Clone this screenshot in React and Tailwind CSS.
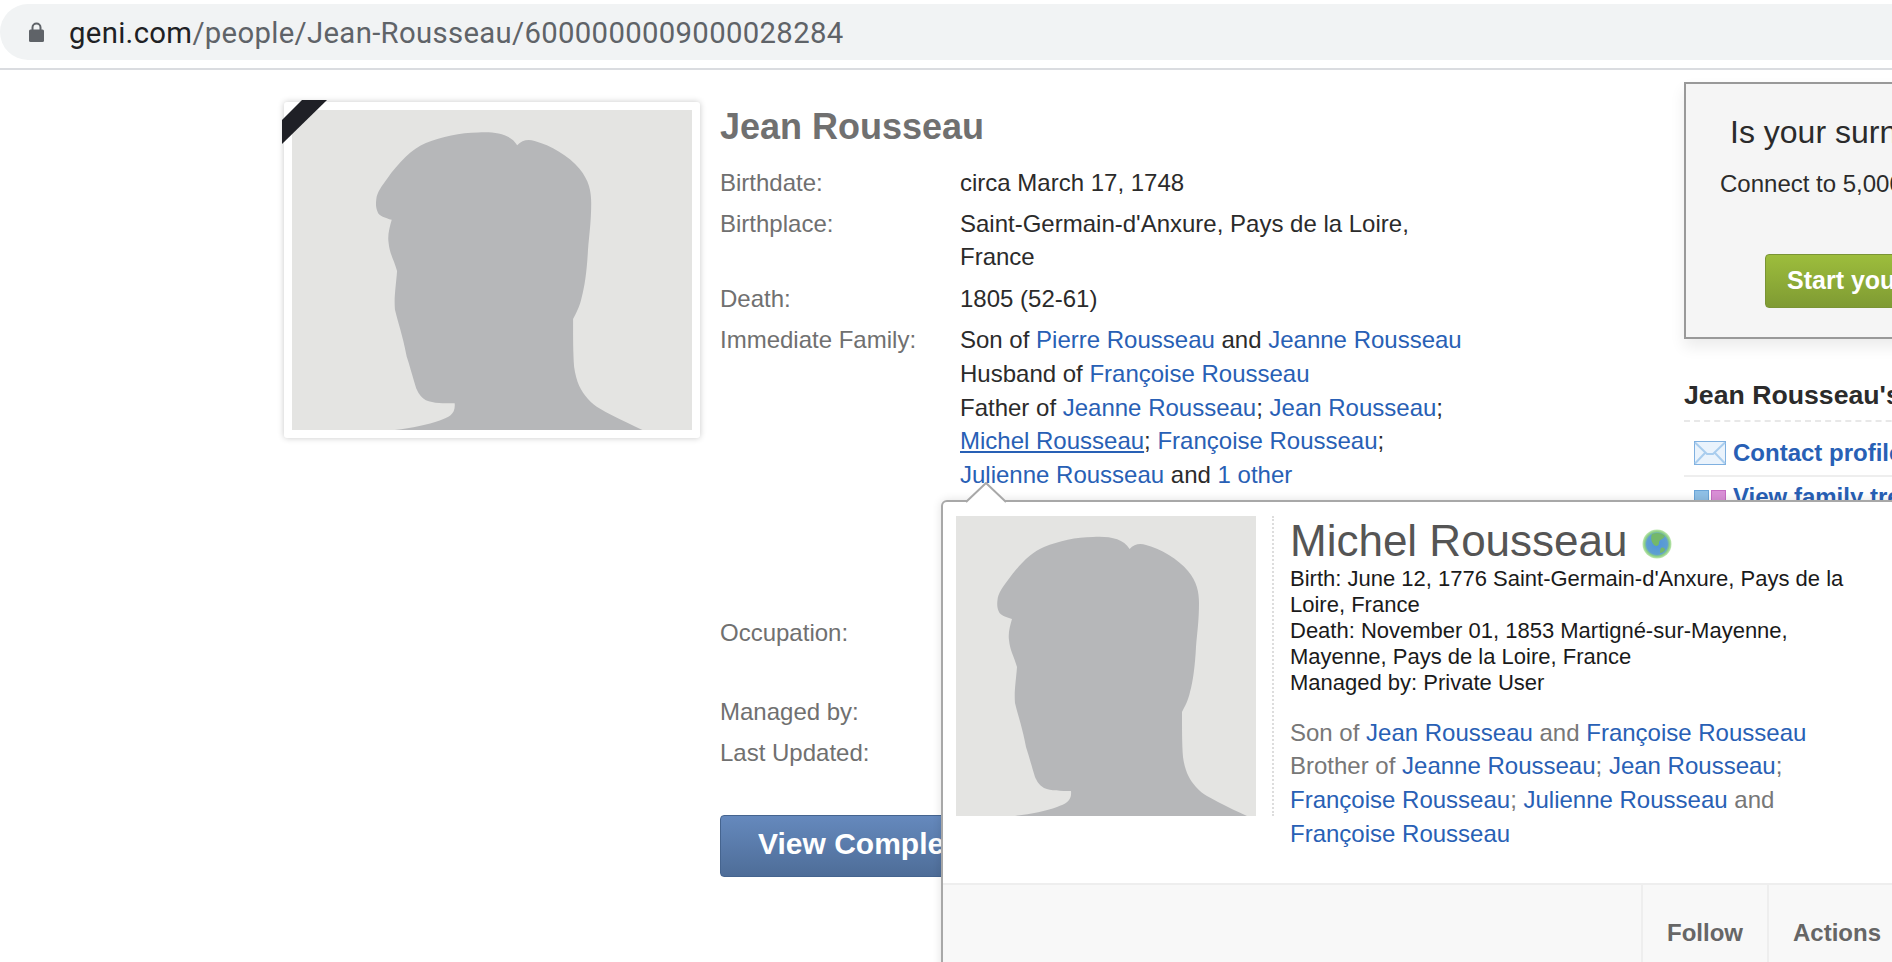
import React from "react";

const L = ({ children, u }) => (
  <a className={"whitespace-nowrap text-[#2860b5] " + (u ? "underline" : "")}>{children}</a>
);

function Photo({ className }) {
  return (
    <svg viewBox="0 0 300 300" className={className}>
      <rect x="-100" y="-10" width="500" height="320" fill="#e4e4e2" />
      <path
        fill="#b6b7b9"
        d="M137 21C152 20 167 22 173.600 33C178 28 184 27 190 29C205 33 222 43 232 55C241 66 243 76 243 87C243 105 241 118 240 131C239 150 237 165 234 176C232 185 229 190 226 196C226 212 226 228 227 241C229 255 233 263 240 271C247 279 255 282 262 286C272 291 282 296 291 300L59 300C75 298 90 295 101 291C110 288 116 285 115 275C105 275 95 275 88 272C82 268 81 265 79 261C75 248 73 240 70 231C66 210 62 200 59 187C58 175 60 165 61 151C58 140 54 135 53 124C52 117 54 110 56 103C50 101 44 99 43 96C41 92 41 88 41.500 84C42 77 47 71 52 64C62 50 75 36 88 31C103 25 120 21 137 21Z"
      />
    </svg>
  );
}

function Row({ label, className, children }) {
  return (
    <div className={"flex " + (className || "")}>
      <div className="w-[240px] shrink-0 text-[#707070]">{label}</div>
      <div className="w-[505px]">{children}</div>
    </div>
  );
}

export default function App() {
  return (
    <div className="relative h-[962px] w-[1892px] overflow-hidden bg-white font-['Liberation_Sans',Arial,sans-serif] text-[24px] leading-[33.75px] text-[#2b2b2b]">
      {/* Browser address bar */}
      <header className="h-[70px] border-b-2 border-[#dadce0] pt-[4px]">
        <div className="flex h-[56px] items-center rounded-l-[28px] bg-[#f1f3f4] pl-[28px]">
          <svg width="17" height="20" viewBox="0 0 17 20" className="shrink-0">
            <path d="M4.500 8V5.500a4 4 0 0 1 8 0V8" fill="none" stroke="#5f6368" strokeWidth="2" />
            <rect x="1" y="7.500" width="15" height="12.500" rx="1.500" fill="#5f6368" />
          </svg>
          <div className="ml-[24px] whitespace-nowrap pt-[3px] font-['Roboto',sans-serif] text-[29.300px] tracking-[0.33px] text-[#5f6368]">
            <span className="text-[#202124]">geni.com</span>/people/Jean-Rousseau/6000000009000028284
          </div>
        </div>
      </header>

      <main className="flex pl-[284px] pt-[12px]">
        {/* Profile photo */}
        <div className="relative mt-[20px] h-[336px] w-[416px] shrink-0 rounded-[3px] bg-white p-[8px] shadow-[0_0_6px_rgba(0,0,0,0.22)]">
          <Photo className="h-[320px] w-[400px]" />
          <svg width="46" height="46" viewBox="0 0 46 46" className="absolute left-[-2px] top-[-2px]">
            <polygon points="20,0 45,0 0,44 0,20" fill="#1f2026" />
          </svg>
        </div>

        {/* Profile details */}
        <div className="ml-[20px] w-[964px] shrink-0">
          <h1 className="mt-[20px] h-[63.500px] pt-[3px] text-[36px] font-bold leading-[44px] text-[#707070]">Jean Rousseau</h1>
          <Row label="Birthdate:" className="h-[41px]">circa March 17, 1748</Row>
          <Row label="Birthplace:" className="h-[75px]">Saint-Germain-d'Anxure, Pays de la Loire, France</Row>
          <Row label="Death:" className="h-[41.500px]">1805 (52-61)</Row>
          <Row label="Immediate Family:" className="h-[293px]">
            <div>Son of <L>Pierre Rousseau</L> and <L>Jeanne Rousseau</L></div>
            <div>Husband of <L>Françoise Rousseau</L></div>
            <div>
              Father of <L>Jeanne Rousseau</L>; <L>Jean Rousseau</L>; <L u>Michel Rousseau</L>; <L>Françoise Rousseau</L>;{" "}
              <L>Julienne Rousseau</L> and <L>1 other</L>
            </div>
            <div>Brother of <L>Paul Rousseau</L>; <L>Pierre Rousseau</L></div>
          </Row>
          <Row label="Occupation:" className="h-[79px]" />
          <Row label="Managed by:" className="h-[41px]" />
          <Row label="Last Updated:" className="h-[78.500px]" />
          <button className="ml-0 h-[62px] w-[420px] rounded-[4px] border border-[#45648f] bg-gradient-to-b from-[#6589bd] to-[#4e6d98] pb-[4px] pl-[37px] text-left text-[30px] font-bold text-white">
            View Complete Profile
          </button>
        </div>

        {/* Right column */}
        <aside className="w-[500px] shrink-0">
          <div className="h-[257px] border-2 border-[#999] bg-[#f5f5f5] shadow-[0_8px_14px_rgba(0,0,0,0.08)]">
            <div className="ml-[44px] mt-[26px] whitespace-nowrap text-[32px] leading-[44px]">Is your surname Rousseau?</div>
            <div className="ml-[34px] mt-[13px] whitespace-nowrap leading-[34px]">Connect to 5,000 people</div>
            <div className="ml-[79px] mt-[53px] flex h-[54px] w-[360px] items-center rounded-[4px] border border-[#7a9435] bg-gradient-to-b from-[#9dbd3c] to-[#7f9b33] pl-[21px] text-[25px] font-bold text-white">
              Start your tree
            </div>
          </div>
          <div className="mt-[39px] h-[44px] whitespace-nowrap border-b-2 border-dashed border-[#e8e8e8] text-[26.670px] font-bold leading-[34px]">
            Jean Rousseau's Actions
          </div>
          <div className="flex h-[55px] items-center border-b-2 border-[#eee] pl-[10px] pt-[9px] text-[24px] font-bold text-[#2860b5]">
            <svg width="32" height="24" viewBox="0 0 32 24" className="shrink-0">
              <rect x="0.500" y="0.500" width="31" height="23" fill="#eaf3fc" stroke="#7fb0e0" />
              <path d="M1 1.500 13 13h6L31 1.500M1 22.500 11 12M31 22.500 21 12" fill="none" stroke="#a9cdee" strokeWidth="2" />
            </svg>
            <span className="ml-[7px] whitespace-nowrap">Contact profile</span>
          </div>
          <div className="flex items-start pl-[10px] pt-[3px] text-[24px] font-bold text-[#2860b5]">
            <svg width="32" height="20" viewBox="0 0 32 20" className="mt-[10px] shrink-0">
              <rect x="0.500" y="0.500" width="14" height="11" fill="#8fc0e6" stroke="#6aa5d8" />
              <rect x="17.500" y="0.500" width="14" height="11" fill="#d98fd6" stroke="#c56cc2" />
              <path d="M7.500 11v5M24.500 11v5" stroke="#8aa" />
            </svg>
            <span className="ml-[7px] whitespace-nowrap">View family tree</span>
          </div>
        </aside>
      </main>

      {/* Hover card over the page */}
      <div className="absolute left-[941px] top-[500px] h-[480px] w-[980px] rounded-tl-[6px] border-2 border-[#a8a8a8] bg-white shadow-[0_0_10px_rgba(0,0,0,0.12)]">
        <svg width="44" height="22" viewBox="0 0 44 22" className="absolute left-[21px] top-[-20px]">
          <path d="M2 20 22 1 42 20" fill="#fff" stroke="#a8a8a8" strokeWidth="2" />
          <rect x="4" y="20" width="36" height="2" fill="#fff" />
        </svg>
        <div className="flex h-[381px] pl-[13px] pt-[14px]">
          <Photo className="h-[300px] w-[300px] shrink-0" />
          <div className="ml-[16px] h-[300px] border-l-2 border-dotted border-[#ddd]" />
          <div className="ml-[16px] w-[580px]">
            <div className="flex items-center text-[44px] leading-[50px] text-[#555]">
              Michel Rousseau
              <svg width="30" height="30" viewBox="0 0 30 30" className="ml-[14px] mt-[6px]">
                <defs>
                  <radialGradient id="g" cx="0.500" cy="0.500" r="0.500">
                    <stop offset="0" stopColor="#4f94dd" />
                    <stop offset="0.720" stopColor="#5f9fd0" />
                    <stop offset="0.850" stopColor="#8ccf84" />
                    <stop offset="1" stopColor="#bfe8b0" />
                  </radialGradient>
                </defs>
                <circle cx="15" cy="15" r="14.500" fill="url(#g)" />
                <path d="M10 5c5-2 10-1 13 2-2 4-6 3-6 7 0 3-3 4-5 2-2-2-4-7-2-11zM19 19c2-1 4 0 4 2-1 2-3 3-5 3 0-2 0-4 1-5z" fill="#74b86a" />
              </svg>
            </div>
            <div className="text-[22px] leading-[25.900px] text-[#1a1a1a]">
              <div>Birth: June 12, 1776 Saint-Germain-d'Anxure, Pays de la Loire, France</div>
              <div>Death: November 01, 1853 Martigné-sur-Mayenne, Mayenne, Pays de la Loire, France</div>
              <div>Managed by: Private User</div>
            </div>
            <div className="mt-[20px] text-[#777]">
              <div>Son of <L>Jean Rousseau</L> and <L>Françoise Rousseau</L></div>
              <div>
                Brother of <L>Jeanne Rousseau</L>; <L>Jean Rousseau</L>; <L>Françoise Rousseau</L>; <L>Julienne Rousseau</L> and{" "}
                <L>Françoise Rousseau</L>
              </div>
            </div>
          </div>
        </div>
        <div className="flex h-[100px] border-t-2 border-[#eee] bg-[#f8f8f8] pl-[698px] text-[24px] font-bold text-[#666]">
          <div className="h-full w-[126px] shrink-0 border-l-2 border-[#eee] pl-[24px] pt-[31px]">Follow</div>
          <div className="h-full w-[200px] shrink-0 border-l-2 border-[#eee] pl-[24px] pt-[31px]">Actions</div>
        </div>
      </div>
    </div>
  );
}
